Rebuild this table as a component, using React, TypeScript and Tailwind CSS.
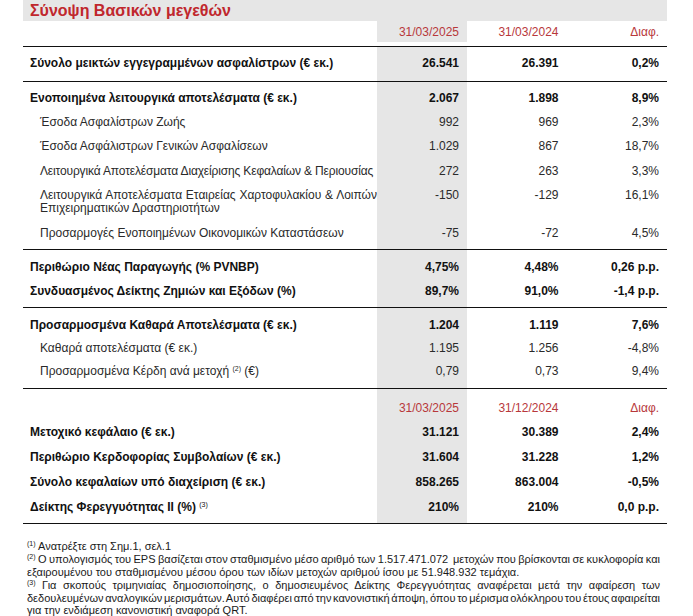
import React from "react";

type Row = {
  label: React.ReactNode;
  values: [string, string, string];
  bold?: boolean;
  sub?: boolean;
  h: string;
};

const RED = "text-[#b8383b]";

function Sup({ n }: { n: number }) {
  return <sup className="relative top-[-4px] align-baseline text-[7px] font-normal">({n})</sup>;
}

function Line() {
  return <div className="h-px w-full bg-[#111]" />;
}

function DataRow({ row }: { row: Row }) {
  const weight = row.bold ? "font-bold text-[#111]" : "font-normal text-[#2a2a2a]";
  return (
    <div className={`flex ${row.h} items-center text-[12px] leading-[13.3px] ${weight}`}>
      <div className={`w-[354px] whitespace-nowrap ${row.sub ? "pl-[17px]" : "pl-[7px]"}`}>{row.label}</div>
      <div className="flex h-full w-[90px] items-center justify-end bg-[#e6e6e6] pr-[8px]">{row.values[0]}</div>
      <div className="w-[100px] pr-[8.5px] text-right">{row.values[1]}</div>
      <div className="w-[100px] pr-[8px] text-right">{row.values[2]}</div>
    </div>
  );
}

function HeaderRow({ cols, h }: { cols: [string, string, string]; h: string }) {
  return (
    <div className={`flex ${h} items-center text-[12px] leading-[14px] ${RED}`}>
      <div className="w-[354px]" />
      <div className="flex h-full w-[90px] items-center justify-end bg-[#e6e6e6] pr-[8px]">{cols[0]}</div>
      <div className="w-[100px] pr-[8.5px] text-right">{cols[1]}</div>
      <div className="w-[100px] pr-[8px] text-right">{cols[2]}</div>
    </div>
  );
}

function Spacer({ h }: { h: string }) {
  return (
    <div className={`flex ${h}`}>
      <div className="w-[354px]" />
      <div className="w-[90px] bg-[#e6e6e6]" />
    </div>
  );
}

const group2: Row[] = [
  { label: "Ενοποιημένα λειτουργικά αποτελέσματα (€ εκ.)", values: ["2.067", "1.898", "8,9%"], bold: true, h: "h-[24.4px]" },
  { label: "Έσοδα Ασφαλίστρων Ζωής", values: ["992", "969", "2,3%"], sub: true, h: "h-[24.4px]" },
  { label: "Έσοδα Ασφάλιστρων Γενικών Ασφαλίσεων", values: ["1.029", "867", "18,7%"], sub: true, h: "h-[24.4px]" },
  {
    label: <span className="tracking-[-0.15px]">Λειτουργικά Αποτελέσματα Διαχείρισης Κεφαλαίων &amp; Περιουσίας</span>,
    values: ["272", "263", "3,3%"],
    sub: true,
    h: "h-[24.4px]",
  },
];

export default function App() {
  return (
    <div className="min-h-[616px] w-[693px] bg-white font-['Liberation_Sans',Arial,sans-serif] text-[#111]">
      <div className="ml-[23px] w-[644px]">
        <div className="flex h-[21px] items-center bg-[#e6e6e6] pl-[7px] text-[16px] font-bold text-[#c0272d]">
          Σύνοψη Βασικών μεγεθών
        </div>
        <div className="pb-[4px]">
          <HeaderRow cols={["31/03/2025", "31/03/2024", "Διαφ."]} h="h-[21px]" />
        </div>
        <Line />
        <DataRow row={{ label: "Σύνολο μεικτών εγγεγραμμένων ασφαλίστρων (€ εκ.)", values: ["26.541", "26.391", "0,2%"], bold: true, h: "h-[34px]" }} />
        <Line />

        <Spacer h="h-[4px]" />
        {group2.map((r, i) => (
          <DataRow key={i} row={r} />
        ))}
        <div className="flex h-[37.7px] items-center text-[12px] leading-[13.3px] text-[#2a2a2a]">
          <div className="w-[354px] pl-[17px]">
            <div className="whitespace-nowrap text-justify [text-align-last:justify]">
              Λειτουργικά Αποτελέσματα Εταιρείας Χαρτοφυλακίου &amp; Λοιπών
            </div>
            <div>Επιχειρηματικών Δραστηριοτήτων</div>
          </div>
          <div className="flex h-full w-[90px] items-start justify-end bg-[#e6e6e6] pr-[8px] pt-[5.6px]">-150</div>
          <div className="w-[100px] self-start pr-[8.5px] pt-[5.6px] text-right">-129</div>
          <div className="w-[100px] self-start pr-[8px] pt-[5.6px] text-right">16,1%</div>
        </div>
        <DataRow row={{ label: "Προσαρμογές Ενοποιημένων Οικονομικών Καταστάσεων", values: ["-75", "-72", "4,5%"], sub: true, h: "h-[24.4px]" }} />
        <Spacer h="h-[3.6px]" />
        <Line />

        <Spacer h="h-[6px]" />
        <DataRow row={{ label: "Περιθώριο Νέας Παραγωγής (% PVNBP)", values: ["4,75%", "4,48%", "0,26 p.p."], bold: true, h: "h-[23.4px]" }} />
        <DataRow row={{ label: "Συνδυασμένος Δείκτης Ζημιών και Εξόδων (%)", values: ["89,7%", "91,0%", "-1,4 p.p."], bold: true, h: "h-[23.4px]" }} />
        <Spacer h="h-[4.2px]" />
        <Line />

        <Spacer h="h-[5.7px]" />
        <DataRow row={{ label: "Προσαρμοσμένα Καθαρά Αποτελέσματα (€ εκ.)", values: ["1.204", "1.119", "7,6%"], bold: true, h: "h-[23.3px]" }} />
        <DataRow row={{ label: "Καθαρά αποτελέσματα (€ εκ.)", values: ["1.195", "1.256", "-4,8%"], sub: true, h: "h-[23.3px]" }} />
        <DataRow
          row={{
            label: (
              <span>
                Προσαρμοσμένα Κέρδη ανά μετοχή <Sup n={2} /> (€)
              </span>
            ),
            values: ["0,79", "0,73", "9,4%"],
            sub: true,
            h: "h-[23.3px]",
          }}
        />
        <Spacer h="h-[4.7px]" />
        <Line />

        <Spacer h="h-[7px]" />
        <HeaderRow cols={["31/03/2025", "31/12/2024", "Διαφ."]} h="h-[24px]" />
        <DataRow row={{ label: "Μετοχικό κεφάλαιο (€ εκ.)", values: ["31.121", "30.389", "2,4%"], bold: true, h: "h-[25px]" }} />
        <DataRow row={{ label: "Περιθώριο Κερδοφορίας Συμβολαίων (€ εκ.)", values: ["31.604", "31.228", "1,2%"], bold: true, h: "h-[25px]" }} />
        <DataRow row={{ label: "Σύνολο κεφαλαίων υπό διαχείριση (€ εκ.)", values: ["858.265", "863.004", "-0,5%"], bold: true, h: "h-[25px]" }} />
        <DataRow
          row={{
            label: (
              <span>
                Δείκτης Φερεγγυότητας II (%) <Sup n={3} />
              </span>
            ),
            values: ["210%", "210%", "0,0 p.p."],
            bold: true,
            h: "h-[25px]",
          }}
        />
        <Spacer h="h-[3px]" />
        <Line />
      </div>

      <div className="ml-[27px] mt-[16px] w-[633px] whitespace-nowrap text-[11px] leading-[12.8px] text-[#1a1a1a]">
        <div>
          <Sup n={1} /> Ανατρέξτε στη Σημ.1, σελ.1
        </div>
        <div className="text-justify [text-align-last:justify] [word-spacing:-2px]">
          <Sup n={2} /> Ο υπολογισμός του EPS βασίζεται στον σταθμισμένο μέσο αριθμό των 1.517.471.072&nbsp; μετοχών που βρίσκονται σε κυκλοφορία και
        </div>
        <div>εξαιρουμένου του σταθμισμένου μέσου όρου των ιδίων μετοχών αριθμού ίσου με 51.948.932 τεμάχια.</div>
        <div className="text-justify [text-align-last:justify] [word-spacing:-2px]">
          <Sup n={3} /> Για σκοπούς τριμηνιαίας δημοσιοποίησης, ο δημοσιευμένος Δείκτης Φερεγγυότητας αναφέρεται μετά την αφαίρεση των
        </div>
        <div className="text-justify [text-align-last:justify] [word-spacing:-2px]">
          δεδουλευμένων αναλογικών μερισμάτων. Αυτό διαφέρει από την κανονιστική άποψη, όπου το μέρισμα ολόκληρου του έτους αφαιρείται
        </div>
        <div>για την ενδιάμεση κανονιστική αναφορά QRT.</div>
      </div>
    </div>
  );
}
